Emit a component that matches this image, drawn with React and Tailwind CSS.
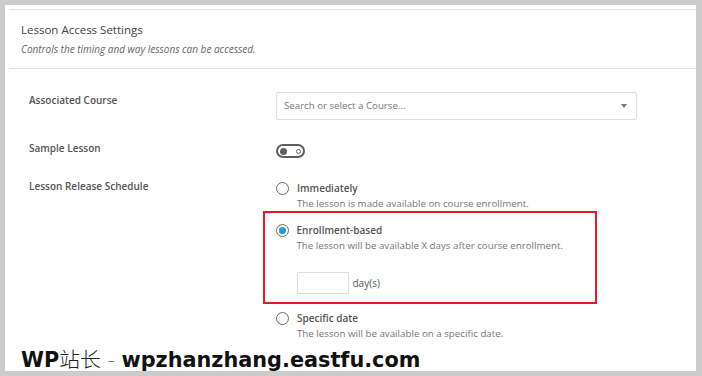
const Radio = ({ checked }) => (
    <span className="w-[13px] h-[13px] rounded-full border-[1.5px] border-[#6b6b6b] flex items-center justify-center shrink-0 bg-white">
        {checked && <span className="w-[7px] h-[7px] rounded-full bg-[#1e9ed8]" />}
    </span>
);

const Option = ({ checked, title, desc, children }) => (
    <div>
        <div className="flex items-center gap-[8px] h-[16px]">
            <Radio checked={checked} />
            <span className="text-[10px] font-semibold text-[#555]">{title}</span>
        </div>
        <p className="pl-[21px] mt-[1px] text-[9.75px] leading-[14px] text-[#777]">{desc}</p>
        {children}
    </div>
);

const App = () => {
    return (
        <div
            className="w-[702px] h-[376px] bg-[#cccccc] pt-[5px] pl-[5px] pr-[6px] pb-[5px] overflow-hidden"
            style={{ fontFamily: '"Open Sans", "Noto Sans", sans-serif' }}
        >
            <div className="relative w-full h-full bg-white pl-[4px] pt-[4px]">
                {/* Header */}
                <div className="border-t border-b border-[#e2e2e2] pl-[12px] pt-[11px] pb-[12px]">
                    <h2 className="text-[11.5px] leading-[18px] text-[#444]">Lesson Access Settings</h2>
                    <p className="text-[10px] leading-[14px] italic text-[#666] mt-[3px]">Controls the timing and way lessons can be accessed.</p>
                </div>

                {/* Settings rows */}
                <div className="pl-[20px] pt-[23px] flex flex-col gap-[20px]">
                    <div className="flex">
                        <div className="w-[247px] text-[10px] font-semibold leading-[16px] text-[#555]">Associated Course</div>
                        <div className="w-[361px] h-[28px] border border-[#ddd] rounded-[2px] flex items-center justify-between pl-[7px] pr-[9px]">
                            <span className="text-[9.7px] text-[#777]">Search or select a Course...</span>
                            <span className="w-0 h-0 border-l-[3.5px] border-r-[3.5px] border-t-[4px] border-l-transparent border-r-transparent border-t-[#777]" />
                        </div>
                    </div>

                    <div className="flex">
                        <div className="w-[247px] text-[10px] font-semibold leading-[16px] text-[#555]">Sample Lesson</div>
                        <div className="mt-[4px] w-[29px] h-[14px] rounded-full border-2 border-[#5f5f5f] flex items-center justify-between px-[2px]">
                            <span className="w-[7px] h-[7px] rounded-full bg-[#5f5f5f]" />
                            <span className="w-[5px] h-[5px] rounded-full border-[1.5px] border-[#5f5f5f]" />
                        </div>
                    </div>

                    <div className="flex">
                        <div className="w-[247px] text-[10px] font-semibold leading-[16px] text-[#555]">Lesson Release Schedule</div>
                        <div className="mt-[2px] flex flex-col">
                            <Option title="Immediately" desc="The lesson is made available on course enrollment." />
                            <div className="-ml-[13px] w-[334px] border-[2.5px] border-[#e51b24] pl-[10.5px] pt-[9px] pb-[8px]">
                                <Option checked title="Enrollment-based" desc="The lesson will be available X days after course enrollment.">
                                    <div className="pl-[21px] mt-[19px] flex items-center gap-[4px]">
                                        <div className="w-[52px] h-[22px] border border-[#ddd]" />
                                        <span className="text-[10px] text-[#555]">day(s)</span>
                                    </div>
                                </Option>
                            </div>
                            <div className="mt-[6px]">
                                <Option title="Specific date" desc="The lesson will be available on a specific date." />
                            </div>
                        </div>
                    </div>
                </div>

                {/* Watermark */}
                <div
                    className="absolute left-[16px] top-[339px] text-[20.8px] font-bold leading-[28px] text-[#111] whitespace-nowrap"
                    style={{ fontFamily: '"DejaVu Sans", "Noto Sans CJK SC", sans-serif' }}
                >
                    WP<span className="font-light text-[#222]" style={{ fontFamily: '"Noto Sans CJK SC", sans-serif' }}>站长</span>
                    <span className="font-light text-[#666]"> - </span>wpzhanzhang.eastfu.com
                </div>
            </div>
        </div>
    );
};

export default App;
